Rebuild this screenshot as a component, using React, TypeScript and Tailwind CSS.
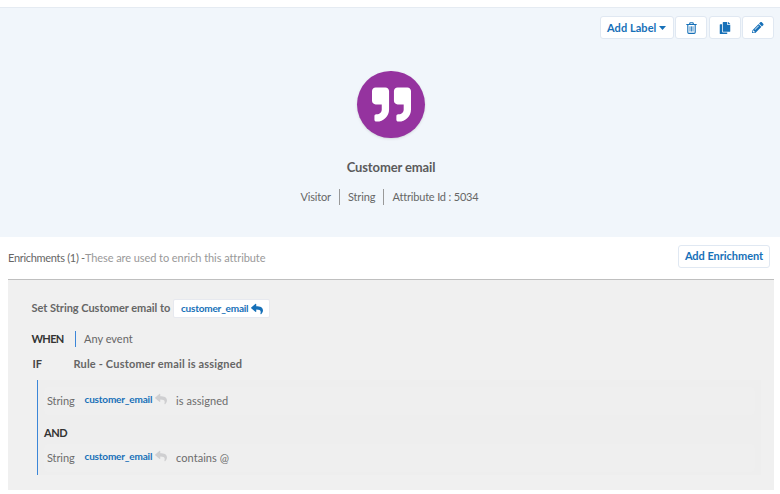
import type { ReactNode } from 'react';
import { FaCopy, FaPencilAlt, FaQuoteRight, FaReply } from 'react-icons/fa';

function TrashIcon() {
  return (
    <svg className="h-3 w-[11px]" viewBox="0 0 11 12" fill="none" stroke="currentColor">
      <path d="M0.3 2.5h10.4M3.5 2.3l.6-1.6h2.8l.6 1.6M1.8 2.8v7.4c0 .8.4 1.2 1 1.2h5.4c.6 0 1-.4 1-1.2V2.8" strokeWidth="1.1" />
      <path d="M4 4.3v5.2M5.5 4.3v5.2M7 4.3v5.2" strokeWidth=".8" />
    </svg>
  );
}

function IconButton({ label, children }: { label: string; children: ReactNode }) {
  return (
    <button
      aria-label={label}
      className="flex h-[23px] w-8 items-center justify-center rounded-[3px] border border-[#e0e8f2] bg-white text-[#1670b8]"
    >
      {children}
    </button>
  );
}

function Condition({ text }: { text: string }) {
  return (
    <div className="flex h-[28px] items-center rounded-sm bg-[#efefef] pl-[3px] text-[11px] text-[#6c6c6c]">
      <span className="w-[37.5px] tracking-[-0.1px]">String</span>
      <span className="flex w-[91.5px] items-center gap-[3px] pb-[5px] text-[10px] font-bold text-[#1670b8]">
        <span className="tracking-[-0.18px]">customer_email</span>
        <FaReply className="size-3 text-[#cfcfd1]" />
      </span>
      <span className="tracking-[0.06px]">{text}</span>
    </div>
  );
}

export default function App() {
  return (
    <div className="h-[494px] w-[780px] overflow-hidden whitespace-nowrap bg-white font-['Lato','Liberation_Sans',sans-serif] text-[11px] leading-4 text-[#666]">
      <header className="mt-[7px] h-[230px] border-t border-[#e5ebf2] bg-[#f1f6fb] pt-2">
        <div className="flex justify-end gap-[1.5px] pr-[6px]">
          <button className="flex h-[23px] w-[74px] items-center gap-[3px] rounded-[3px] border border-[#e0e8f2] bg-white pl-[6.5px] text-[11px] font-bold text-[#1670b8]">
            <span className="tracking-[0.06px]">Add Label</span>
            <svg className="h-1 w-[7px]" viewBox="0 0 7 4" fill="currentColor">
              <path d="M0 0h7L3.5 4z" />
            </svg>
          </button>
          <IconButton label="Delete"><TrashIcon /></IconButton>
          <IconButton label="Copy"><FaCopy className="size-3" /></IconButton>
          <IconButton label="Edit"><FaPencilAlt className="size-[11.5px]" /></IconButton>
        </div>
        <div className="flex flex-col items-center pl-[2px] pt-8">
          <div className="flex h-[67px] w-[68px] items-center justify-center rounded-full bg-[#95339f] text-white shadow-sm">
            <FaQuoteRight className="size-[39px]" />
          </div>
          <h1 className="mt-[21px] text-[13px] font-bold leading-4 tracking-[-0.12px] text-[#5b5b5b]">Customer email</h1>
          <div className="mt-[14px] flex h-4 items-center pr-[3px] tracking-[-0.18px]">
            <span className="border-r border-[#999] pr-2">Visitor</span>
            <span className="border-r border-[#999] px-2 tracking-[-0.1px]">String</span>
            <span className="pl-2">Attribute Id : 5034</span>
          </div>
        </div>
      </header>

      <section className="px-2 pr-[6px]">
        <div className="flex h-[42px] items-center justify-between pr-1">
          <p className="tracking-[-0.3px]">
            Enrichments (1) -<span className="tracking-[-0.07px] text-[#999]">These are used to enrich this attribute</span>
          </p>
          <button className="mb-1 h-[23px] w-[92px] rounded-[3px] border border-[#e0e8f2] bg-white text-[11px] font-bold tracking-[-0.04px] text-[#1670b8]">
            Add Enrichment
          </button>
        </div>
        <div className="h-[211px] border-t border-[#bfbfbf] bg-[#f0f0f0] pl-[23.5px] pr-[13px] pt-[19px]">
          <div className="flex h-[19px] items-center font-bold text-[#666]">
            <span className="w-[141.5px] pb-0.5 tracking-[-0.03px]">Set String Customer email to</span>
            <span className="flex h-[19px] w-[97px] items-center gap-[3px] rounded-[2px] border border-[#e7e9ef] bg-white pl-[7px] text-[10px] text-[#1670b8]">
              <span className="pb-0.5 tracking-[-0.2px]">customer_email</span>
              <FaReply className="size-3" />
            </span>
          </div>
          <div className="mt-[13px] flex h-4 items-center">
            <span className="w-[43.5px] font-bold tracking-[-0.7px] text-[#333]">WHEN</span>
            <span className="border-l border-[#3b86d8] pl-2">Any event</span>
          </div>
          <div className="mt-[9px] flex h-4 items-center pl-px font-bold">
            <span className="w-[41px] text-[#444]">IF</span>
            <span className="tracking-[0.18px]">Rule - Customer email is assigned</span>
          </div>
          <div className="ml-[5.5px] mt-2 h-[95px] border-l border-[#3b86d8] bg-[#eeeeee] pl-[6px] pr-[6px] pt-[7px]">
            <Condition text="is assigned" />
            <div className="mt-[10px] h-4 font-bold tracking-[-0.4px] text-[#333]">AND</div>
            <div className="mt-[3px]"><Condition text="contains @" /></div>
          </div>
        </div>
      </section>
    </div>
  );
}
